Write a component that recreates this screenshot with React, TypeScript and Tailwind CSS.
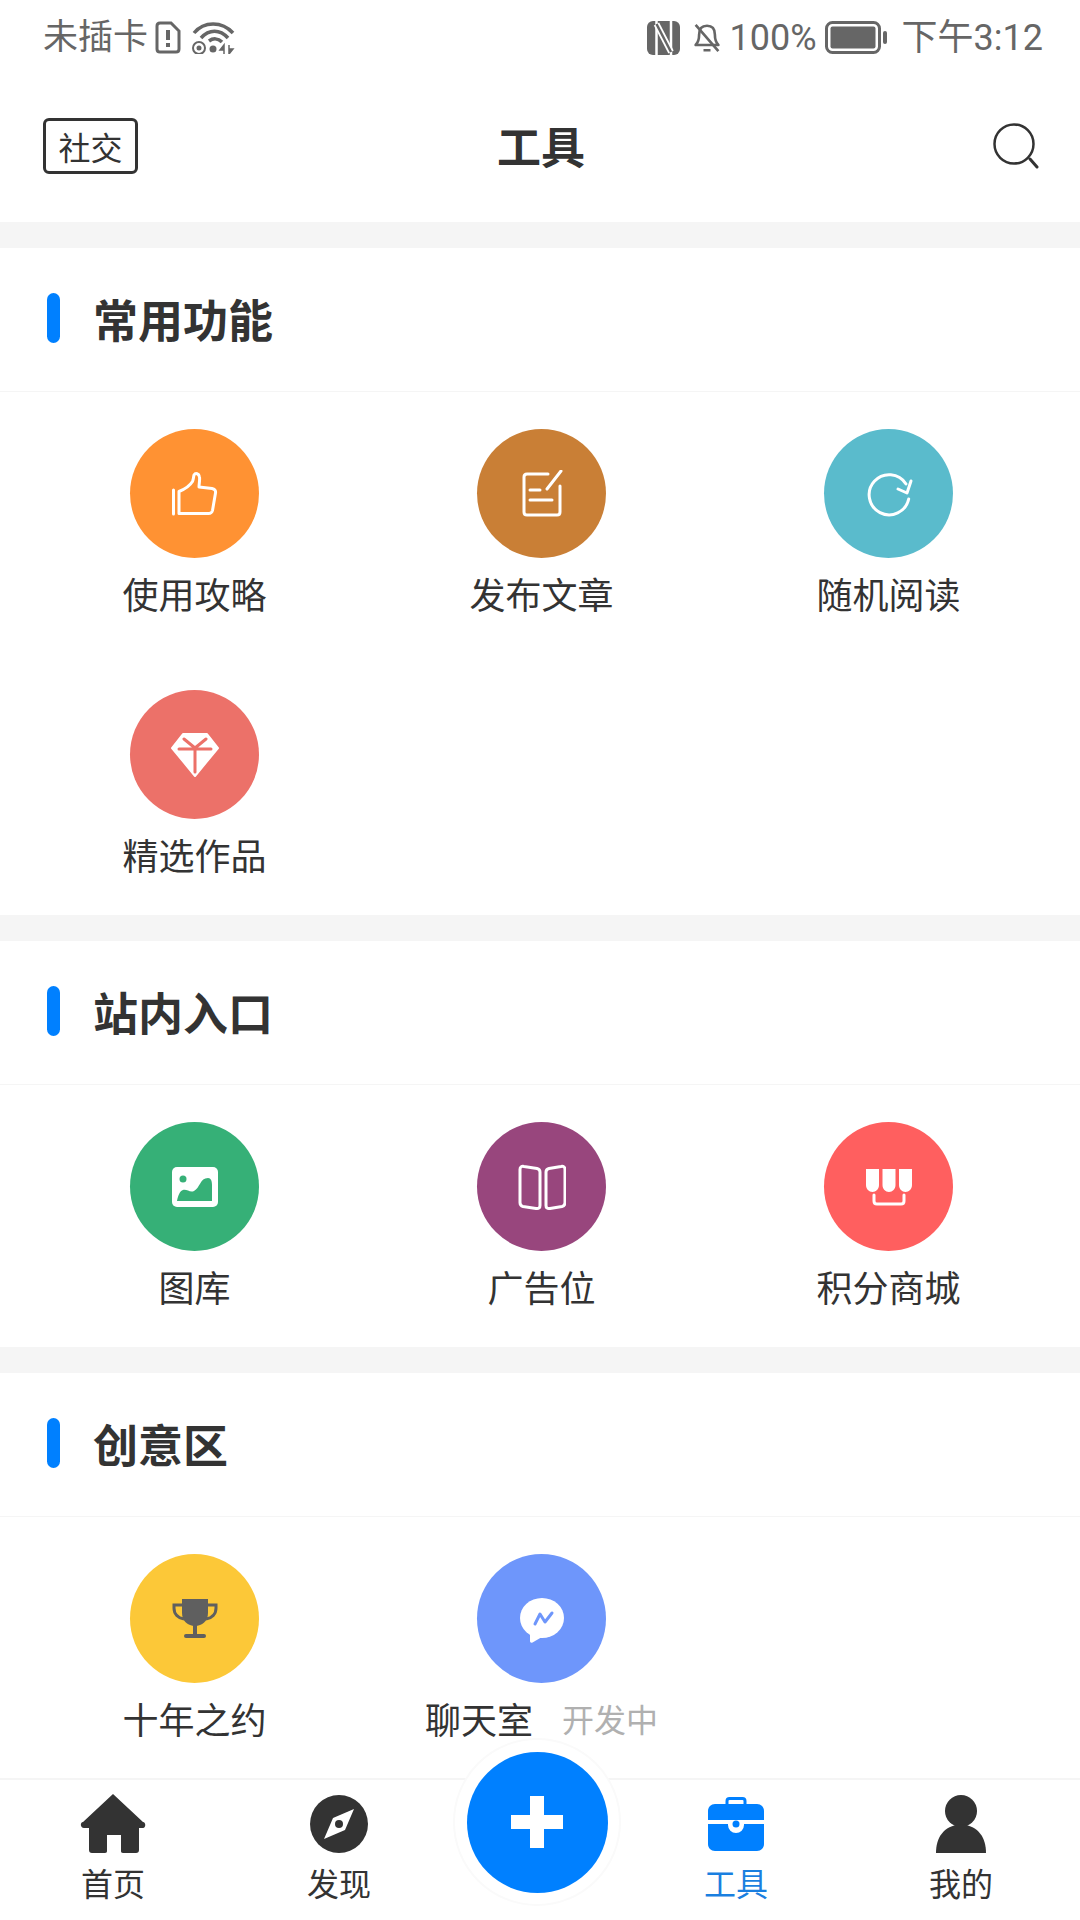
import React from "react";

const FONT = "font-['Noto_Sans_CJK_SC','Noto_Sans',sans-serif]";

function IconBox({ children }: { children: React.ReactNode }) {
  return (
    <svg width="48" height="48" viewBox="0 0 48 48" fill="none">
      {children}
    </svg>
  );
}

const thumb = (
  <IconBox>
    <path d="M2.500 20v24" stroke="#fff" strokeWidth="3" strokeLinecap="round" />
    <path
      d="M8 21.500c5-2 11-6 13.500-10 1-2 1-5 1.500-6.500 1.500-2.500 5-1.500 5.500 2 .5 3-.5 7-.5 10l13 1.500c2.500.5 4 2 3.500 4.500l-3 17.500c-.5 2-2 3-4 3H8z"
      stroke="#fff"
      strokeWidth="3"
      strokeLinejoin="round"
    />
  </IconBox>
);

const article = (
  <IconBox>
    <path
      d="M30 4H9c-2 0-3 1-3 3v35c0 2 1 3 3 3h30c2 0 3-1 3-3V16"
      stroke="#fff"
      strokeWidth="3"
      strokeLinecap="round"
    />
    <path d="M29 19 43 1" stroke="#fff" strokeWidth="3" strokeLinecap="round" />
    <path d="M12 20h10M12 30h22" stroke="#fff" strokeWidth="3" strokeLinecap="round" />
  </IconBox>
);

const refresh = (
  <IconBox>
    <path d="M43.700 29A20 20 0 1 1 41 14" stroke="#fff" strokeWidth="3" strokeLinecap="round" />
    <path d="M33 19 42 23 46 11" stroke="#fff" strokeWidth="3" strokeLinecap="round" strokeLinejoin="round" />
  </IconBox>
);

const diamond = (
  <IconBox>
    <path d="M12 3h24l11 14-23 28L1 17z" fill="#fff" stroke="#fff" strokeWidth="2" strokeLinejoin="round" />
    <path d="M13 8l11 9 11-9M8 18h32M24 17v24" stroke="#EC7169" strokeWidth="3" strokeLinecap="round" />
  </IconBox>
);

const picture = (
  <IconBox>
    <rect x="1" y="4" width="46" height="40" rx="5" fill="#fff" />
    <circle cx="12" cy="16" r="3.500" fill="#36B077" />
    <path d="M6 38c1-6 3-10 6-11 4-1 7 3 11 1 6-3 6-13 14-13 3 0 4 3 4 7v16z" fill="#36B077" />
  </IconBox>
);

const book = (
  <IconBox>
    <path
      d="M22 9c0-2-1-3-3-3.500L6 3.500C3.500 3 2 4 2 6.500v33c0 2 1 3.500 3 4l13 2c3 .5 4-1 4-3zM28 9c0-2 1-3 3-3.500l12-2c2.500-.5 4 .5 4 3v33c0 2-1 3.500-3 4l-12 2c-3 .5-4-1-4-3z"
      stroke="#fff"
      strokeWidth="3"
      strokeLinejoin="round"
    />
  </IconBox>
);

const store = (
  <IconBox>
    <path
      d="M1 6h13v16c0 4-3 7-6.500 7S1 26 1 22zM17.500 6h13v16c0 4-3 7-6.500 7s-6.500-3-6.500-7zM34 6h13v16c0 4-3 7-6.500 7S34 26 34 22z"
      fill="#fff"
    />
    <path d="M9 32v6c0 2 1 3 3 3h24c2 0 3-1 3-3v-6" stroke="#fff" strokeWidth="3" strokeLinecap="round" />
  </IconBox>
);

const trophy = (
  <IconBox>
    <path d="M11 4h26v14c0 8-6 13-13 13S11 26 11 18z" fill="#5f5f5f" />
    <path d="M11 10H3v3c0 6 4 10 10 11M37 10h8v3c0 6-4 10-10 11" stroke="#5f5f5f" strokeWidth="3" />
    <path d="M22 30h4v9h-4z" fill="#5f5f5f" />
    <rect x="13" y="39" width="22" height="4" rx="2" fill="#5f5f5f" />
  </IconBox>
);

const messenger = (
  <IconBox>
    <ellipse cx="24" cy="23" rx="22" ry="20" fill="#fff" />
    <path d="M12 36v10c0 1.500 1 2 2.500 1.500L24 42z" fill="#fff" />
    <path d="M17 29l5-10 5 8 7-9" stroke="#6E96FB" strokeWidth="3" strokeLinejoin="round" strokeLinecap="round" />
  </IconBox>
);

interface ToolItem {
  label: string;
  color: string;
  icon: React.ReactNode;
  note?: string;
}

function Tool({ item }: { item: ToolItem }) {
  return (
    <div className="flex flex-col items-center">
      <div className={`flex h-[129px] w-[129px] items-center justify-center rounded-full ${item.color}`}>
        {item.icon}
      </div>
      <div className="mt-[13px] flex h-[44px] items-center gap-[29px] whitespace-nowrap">
        <span className="text-[36px] leading-[44px] text-[#333]">{item.label}</span>
        {item.note && <span className="text-[32px] leading-[44px] text-[#b0b0b0]">{item.note}</span>}
      </div>
    </div>
  );
}

function Section({ title, items, pad }: { title: string; items: ToolItem[]; pad: string }) {
  return (
    <section className="bg-white">
      <div className="flex h-[144px] items-center border-b border-[#f5f5f5] pb-[4px] pl-[47px]">
        <div className="h-[50px] w-[13px] rounded-full bg-[#0080ff]" />
        <h2 className="ml-[33px] pt-[2px] text-[45px] font-bold leading-none text-[#333]">{title}</h2>
      </div>
      <div className={`grid grid-cols-3 gap-y-[75px] pl-[21px] pr-[18px] pt-[37px] ${pad}`}>
        {items.map((item) => (
          <Tool key={item.label} item={item} />
        ))}
      </div>
    </section>
  );
}

function Band() {
  return <div className="h-[26px] bg-[#f5f5f5]" />;
}

function StatusBar() {
  return (
    <div className="flex h-[75px] items-center justify-between pl-[43px] pr-[37px] leading-none text-[#666] font-['Roboto','Noto_Sans_CJK_SC',sans-serif]">
      <div className="flex items-center text-[35px]">
        <span>未插卡</span>
        <svg className="ml-[7px]" width="26" height="33" viewBox="0 0 26 33" fill="none">
          <path d="M2 5c0-2 1-3 3-3h11l8 8v18c0 2-1 3-3 3H5c-2 0-3-1-3-3z" stroke="#666" strokeWidth="3" />
          <path d="M13 9v10M13 22v4" stroke="#666" strokeWidth="4" />
        </svg>
        <svg className="ml-[10px]" width="44" height="33" viewBox="0 0 44 33" fill="none">
          <path d="M3 12C13 0 31 0 42 12M10 17c8-9 19-9 27 0M18 20c4-3 9-3 13 1" stroke="#666" strokeWidth="3.500" />
          <circle cx="8" cy="27" r="6" stroke="#666" strokeWidth="2" />
          <circle cx="8" cy="27" r="2.500" fill="#666" />
          <circle cx="22" cy="28" r="3.500" fill="#666" />
          <path d="M33 33v-9l-4 5h4M38 24v9l4-5h-4" fill="#666" stroke="#666" strokeWidth="1.500" />
        </svg>
      </div>
      <div className="flex items-center text-[36px]">
        <svg width="33" height="34" viewBox="0 0 33 34" fill="none">
          <rect width="33" height="34" rx="6" fill="#666" />
          <path d="M9.500 0v34M24 0v34" stroke="#fff" strokeWidth="2.500" />
          <path d="M9.500 3 24 31" stroke="#fff" strokeWidth="6" />
          <path d="M9.500 3 24 31" stroke="#666" strokeWidth="2.500" />
        </svg>
        <svg className="ml-[13px]" width="28" height="34" viewBox="0 0 32 34" fill="none">
          <path d="M16 3c-6 0-9 4-9 10 0 6-1 9-4 12h26c-3-3-4-6-4-12 0-6-3-10-9-10z" stroke="#666" strokeWidth="3" strokeLinejoin="round" />
          <path d="M12 31h8M3 2l26 30" stroke="#666" strokeWidth="3" />
        </svg>
        <span className="ml-[9px]">100%</span>
        <svg className="ml-[8px]" width="62" height="33" viewBox="0 0 62 33" fill="none">
          <rect x="1.500" y="1.500" width="53" height="30" rx="6" stroke="#666" strokeWidth="3" />
          <rect x="5.500" y="5.500" width="45" height="22" rx="2" fill="#666" />
          <rect x="58" y="10" width="4" height="13" rx="2" fill="#666" />
        </svg>
        <span className="ml-[15px]">下午3:12</span>
      </div>
    </div>
  );
}

function Header() {
  return (
    <div className="grid h-[147px] grid-cols-3 items-center pb-[5px] pl-[43px] pr-[41px]">
      <div className="flex h-[56px] w-[95px] items-center justify-center rounded-[6px] border-[3px] border-[#333] text-[32px] leading-none text-[#333]">
        社交
      </div>
      <div className="pb-[2px] text-center text-[44px] font-bold leading-none text-[#333]">工具</div>
      <div className="flex justify-end">
        <svg width="46" height="46" viewBox="0 0 46 46" fill="none">
          <circle cx="21" cy="21" r="19.500" stroke="#333" strokeWidth="2.500" />
          <path d="M37 36l7 8" stroke="#333" strokeWidth="3" strokeLinecap="round" />
        </svg>
      </div>
    </div>
  );
}

function TabItem({ label, icon, active }: { label: string; icon: React.ReactNode; active?: boolean }) {
  return (
    <div className="flex flex-col items-center pt-[14px]">
      <div className="flex h-[60px] items-center justify-center">{icon}</div>
      <div className={`mt-[8px] text-[32px] leading-[40px] ${active ? "text-[#1a7fe0]" : "text-[#333]"}`}>{label}</div>
    </div>
  );
}

function TabBar() {
  return (
    <div className="relative h-[142px] shrink-0 border-t-2 border-[#f5f5f5] bg-white">
      <div className="grid grid-cols-[226px_226px_172px_224px_226px]">
        <TabItem
          label="首页"
          icon={
            <svg width="66" height="60" viewBox="0 0 66 60" fill="#333">
              <path d="M33 0 63 28h0c3 0 3 6 0 6h-4v22c0 2-1 3-3 3H43c-1.500 0-2-1-2-2V41H27v16c0 1-.5 2-2 2H12c-2 0-3-1-3-3V34H4c-4 0-4-6-1-6z" />
            </svg>
          }
        />
        <TabItem
          label="发现"
          icon={
            <svg width="58" height="58" viewBox="0 0 58 58">
              <circle cx="29" cy="29" r="29" fill="#333" />
              <path d="M44 14 14 44l9-21z M44 14 35 35 14 44z" fill="#fff" />
              <circle cx="29" cy="29" r="4" fill="#333" />
            </svg>
          }
        />
        <div />
        <TabItem
          label="工具"
          active
          icon={
            <svg width="56" height="54" viewBox="0 0 56 54" fill="none">
              <path d="M19 8V4c0-1.500 1-2.500 2.500-2.500h13C36 1.500 37 2.500 37 4v4" stroke="#0080ff" strokeWidth="3" />
              <path d="M0 14c0-4 3-7 7-7h42c4 0 7 3 7 7v9H0z" fill="#0080ff" />
              <path d="M0 27h20v1a8 8 0 0 0 16 0v-1h20v20c0 4-3 7-7 7H7c-4 0-7-3-7-7z" fill="#0080ff" />
              <circle cx="28" cy="27" r="3.500" fill="#0080ff" />
            </svg>
          }
        />
        <TabItem
          label="我的"
          icon={
            <svg width="50" height="58" viewBox="0 0 50 58" fill="#333">
              <circle cx="25" cy="16" r="16" />
              <path d="M0 58c0-15 7-27 25-29 18 2 25 14 25 29z" />
            </svg>
          }
        />
      </div>
      {/* floating publish button over the bar */}
      <div className="absolute left-[453px] top-[-42px] flex h-[168px] w-[168px] items-center justify-center rounded-full border-2 border-[#fafafa] bg-white">
        <div className="flex h-[141px] w-[141px] items-center justify-center rounded-full bg-[#0080ff]">
          <svg width="52" height="52" viewBox="0 0 52 52">
            <path d="M19 0h14v19h19v14H33v19H19V33H0V19h19z" fill="#fff" />
          </svg>
        </div>
      </div>
    </div>
  );
}

export default function App() {
  return (
    <div className={`flex h-[1920px] w-[1080px] flex-col overflow-hidden bg-white ${FONT}`}>
      <StatusBar />
      <Header />
      <main className="min-h-0 flex-1 overflow-hidden">
        <Band />
        <Section
          title="常用功能"
          pad="pb-[39px]"
          items={[
            { label: "使用攻略", color: "bg-[#ff9233]", icon: thumb },
            { label: "发布文章", color: "bg-[#c97f36]", icon: article },
            { label: "随机阅读", color: "bg-[#5abbcc]", icon: refresh },
            { label: "精选作品", color: "bg-[#ec7169]", icon: diamond },
          ]}
        />
        <Band />
        <Section
          title="站内入口"
          pad="pb-[39px]"
          items={[
            { label: "图库", color: "bg-[#36b077]", icon: picture },
            { label: "广告位", color: "bg-[#98467d]", icon: book },
            { label: "积分商城", color: "bg-[#ff5f5f]", icon: store },
          ]}
        />
        <Band />
        <Section
          title="创意区"
          pad="pb-[39px]"
          items={[
            { label: "十年之约", color: "bg-[#fcc838]", icon: trophy },
            { label: "聊天室", color: "bg-[#6e96fb]", icon: messenger, note: "开发中" },
          ]}
        />
      </main>
      <TabBar />
    </div>
  );
}
